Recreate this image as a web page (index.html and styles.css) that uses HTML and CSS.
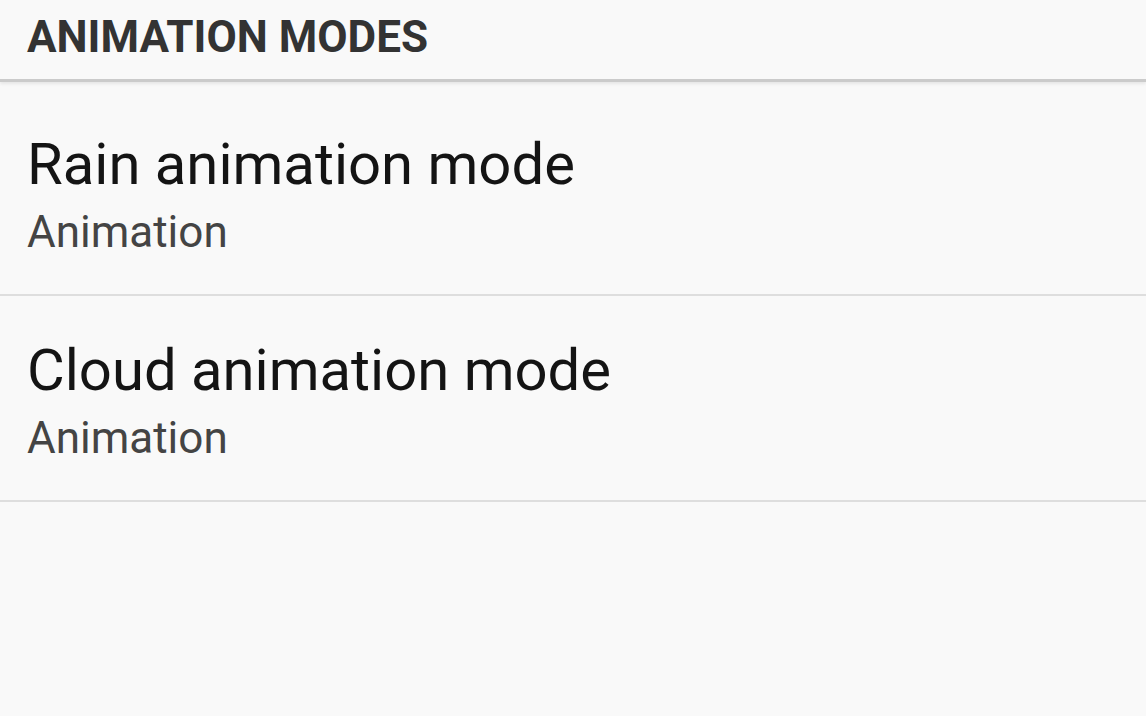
FILE: index.html
```html
<!DOCTYPE html>
<html>
<head>
<meta charset="utf-8">
<link rel="stylesheet" href="styles.css">
</head>
<body>
<div class="screen">
  <div class="section-header">ANIMATION MODES</div>
  <div class="list">
    <div class="item">
      <div class="title">Rain animation mode</div>
      <div class="subtitle">Animation</div>
    </div>
    <div class="item">
      <div class="title">Cloud animation mode</div>
      <div class="subtitle">Animation</div>
    </div>
  </div>
</div>
</body>
</html>
```
FILE: styles.css
```css
html, body {
  margin: 0;
  padding: 0;
  background: #f9f9f9;
}
.screen {
  width: 1146px;
  height: 716px;
  overflow: hidden;
  background: #f9f9f9;
  font-family: Roboto, "Noto Sans", sans-serif;
}
.section-header {
  height: 82px;
  box-sizing: border-box;
  padding: 13px 0 0 27px;
  font-size: 44px;
  line-height: 48px;
  font-weight: 700;
  color: #333;
  border-bottom: 3px solid #cbcbcb;
  box-shadow: 0 2px 3px rgba(0,0,0,0.08);
}
.list {
  padding-top: 8px;
}
.item {
  height: 206px;
  box-sizing: border-box;
  padding: 40px 0 0 27px;
  border-bottom: 2px solid #dedede;
}
.title {
  font-size: 58px;
  line-height: 68px;
  color: #141414;
}
.subtitle {
  margin-top: 10px;
  font-size: 44px;
  line-height: 48px;
  color: #444;
}
```
